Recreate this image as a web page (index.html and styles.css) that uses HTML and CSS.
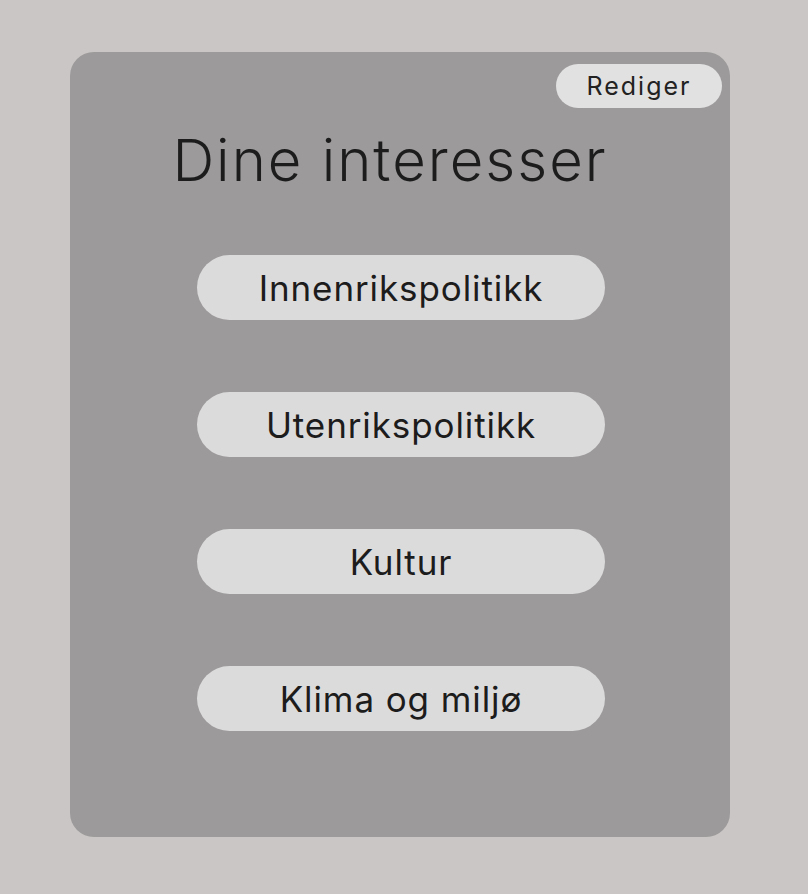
FILE: index.html
```html
<!DOCTYPE html>
<html lang="no">
<head>
    <meta charset="UTF-8">
    <meta name="viewport" content="width=device-width, initial-scale=1.0">
    <title>Dine interesser</title>
    <link rel="stylesheet" href="styles.css">
</head>
<body>
    <div id="wrapper">
        <div class="card">
            <div class="card-top">
                <button class="edit-btn" type="button">Rediger</button>
            </div>
            <h1 class="title">Dine interesser</h1>
            <ul class="interest-list">
                <li class="interest">Innenrikspolitikk</li>
                <li class="interest">Utenrikspolitikk</li>
                <li class="interest">Kultur</li>
                <li class="interest">Klima og miljø</li>
            </ul>
        </div>
    </div>
</body>
</html>
```

FILE: styles.css
```css
body{
    margin: 0;
    background-color: #cac6c5;
    font-family: Inter, "Noto Sans", sans-serif;
    color: #1c1c1c;
}
#wrapper{
    width: 808px;
    height: 894px;
    padding-top: 52px;
    box-sizing: border-box;
}
.card{
    width: 660px;
    height: 785px;
    margin-left: 70px;
    background-color: #9c9a9a;
    border-radius: 24px;
    box-sizing: border-box;
    padding: 12px 8px 0 8px;
}
.card-top{
    display: flex;
    justify-content: flex-end;
}
.edit-btn{
    width: 166px;
    height: 44px;
    border: none;
    border-radius: 22px;
    background-color: #e2e1e1;
    font-family: Inter, "Noto Sans", sans-serif;
    font-size: 25px;
    font-weight: 400;
    letter-spacing: 2px;
    color: #222222;
    padding: 0;
}
.title{
    margin: 16px 0 0 0;
    font-size: 58px;
    font-weight: 300;
    letter-spacing: 2px;
    line-height: 72px;
    text-align: center;
    padding-right: 20px;
}
.interest-list{
    list-style: none;
    margin: 59px 0 0 0;
    padding: 0 0 0 2px;
    display: flex;
    flex-direction: column;
    align-items: center;
    gap: 72px;
}
.interest{
    width: 408px;
    height: 65px;
    border-radius: 33px;
    background-color: #dcdbdb;
    display: flex;
    align-items: center;
    justify-content: center;
    font-size: 35px;
    font-weight: 400;
    letter-spacing: 0.9px;
}
```
